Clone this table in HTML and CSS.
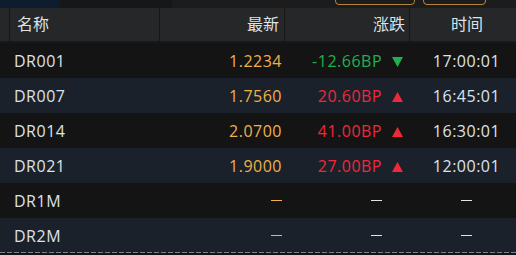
FILE: index.html
```html
<!DOCTYPE html>
<html lang="zh">
<head>
<meta charset="utf-8">
<link rel="stylesheet" href="styles.css">
</head>
<body>
<div class="topbar">
  <div class="tb-nav"></div>
  <div class="tb-mid"></div>
  <div class="tb-rest">
    <div class="tb-btn tb-btn1"></div>
    <div class="tb-btn tb-btn2"></div>
  </div>
</div>
<div class="grid">
  <div class="hcell lead"></div>
  <div class="hcell name">名称</div>
  <div class="hcell num">最新</div>
  <div class="hcell chg">涨跌</div>
  <div class="hcell time">时间</div>
</div>
<div class="rows">
  <div class="row odd">
    <div class="cell lead"></div>
    <div class="cell name">DR001</div>
    <div class="cell num">1.2234</div>
    <div class="cell chg down"><span>-12.66BP</span><span class="tri"><svg viewBox="0 0 11 10" width="11" height="10"><polygon points="0,0 11,0 5.5,10" fill="#1fb14f"/></svg></span></div>
    <div class="cell time">17:00:01</div>
  </div>
  <div class="row even">
    <div class="cell lead"></div>
    <div class="cell name">DR007</div>
    <div class="cell num">1.7560</div>
    <div class="cell chg up"><span>20.60BP</span><span class="tri"><svg viewBox="0 0 11 10" width="11" height="10"><polygon points="5.5,0 11,10 0,10" fill="#f0283a"/></svg></span></div>
    <div class="cell time">16:45:01</div>
  </div>
  <div class="row odd">
    <div class="cell lead"></div>
    <div class="cell name">DR014</div>
    <div class="cell num">2.0700</div>
    <div class="cell chg up"><span>41.00BP</span><span class="tri"><svg viewBox="0 0 11 10" width="11" height="10"><polygon points="5.5,0 11,10 0,10" fill="#f0283a"/></svg></span></div>
    <div class="cell time">16:30:01</div>
  </div>
  <div class="row even">
    <div class="cell lead"></div>
    <div class="cell name">DR021</div>
    <div class="cell num">1.9000</div>
    <div class="cell chg up"><span>27.00BP</span><span class="tri"><svg viewBox="0 0 11 10" width="11" height="10"><polygon points="5.5,0 11,10 0,10" fill="#f0283a"/></svg></span></div>
    <div class="cell time">12:00:01</div>
  </div>
  <div class="row odd">
    <div class="cell lead"></div>
    <div class="cell name">DR1M</div>
    <div class="cell num"><span class="dash dash-y"></span></div>
    <div class="cell chg"><span class="dash"></span><span class="tri"></span></div>
    <div class="cell time"><span class="dash"></span></div>
  </div>
  <div class="row even last">
    <div class="cell lead"></div>
    <div class="cell name">DR2M</div>
    <div class="cell num"><span class="dash dash-y"></span></div>
    <div class="cell chg"><span class="dash"></span><span class="tri"></span></div>
    <div class="cell time"><span class="dash"></span></div>
  </div>
</div>
</body>
</html>
```

FILE: styles.css
```css
html, body {
  margin: 0;
  padding: 0;
  background: #141414;
  width: 516px;
  height: 255px;
  overflow: hidden;
  font-family: "Open Sans", "Noto Sans CJK SC", sans-serif;
  font-size: 16px;
  color: #dde2e8;
}

.topbar {
  display: flex;
  height: 8px;
  overflow: hidden;
}
.tb-nav { width: 60px; background: #0f1c2e; }
.tb-mid { width: 112px; background: #171717; }
.tb-rest {
  flex: 1;
  background: #1c1c1c;
  display: flex;
  align-items: flex-end;
  padding-left: 163px;
  gap: 8px;
}
.tb-btn {
  height: 20px;
  margin-bottom: 3px;
  border: 1px solid #b5853f;
  border-radius: 4px;
  box-sizing: border-box;
}
.tb-btn1 { width: 80px; }
.tb-btn2 { width: 63px; }

.grid, .row {
  display: grid;
  grid-template-columns: 9px 150px 125px 125px 1fr;
}
.grid {
  height: 35px;
  background: #252729;
  border-bottom: 2px solid #181818;
  box-sizing: border-box;
}
.hcell {
  line-height: 33px;
  border-left: 1px solid #161616;
}
.hcell.lead { border-left: none; }
.hcell.name { padding-left: 7px; }
.hcell.num { text-align: right; padding-right: 5px; }
.hcell.chg { text-align: right; padding-right: 4px; }
.hcell.time { text-align: center; padding-left: 8px; }

.row {
  height: 35px;
  padding-top: 2px;
  line-height: 33px;
  box-sizing: border-box;
  letter-spacing: 0.5px;
}
.row.odd { background: #141414; }
.row.even { background: #1b212b; }
.row.last {
  background-image: repeating-linear-gradient(to right, #7c8189 0 5px, transparent 5px 7px);
  background-size: 100% 1px;
  background-position: 0 bottom;
  background-repeat: no-repeat;
}
.cell { white-space: nowrap; }
.cell.name { padding-left: 5px; }
.cell.num { text-align: right; padding-right: 2px; color: #f0b04a; }
.cell.chg {
  display: flex;
  justify-content: flex-end;
  align-items: center;
  padding-right: 6px;
  gap: 10px;
}
.cell.chg.down { color: #1fb14f; }
.cell.chg.up { color: #f0283a; }
.tri { width: 11px; height: 10px; display: inline-block; line-height: 0; }
.tri svg { display: block; }
.cell.time { text-align: center; padding-left: 8px; }

.dash {
  display: inline-block;
  width: 11px;
  height: 1px;
  background: #e0e4ea;
  vertical-align: top;
  margin-top: 15px;
}
.cell.chg .dash { align-self: flex-start; }
.dash-y { background: #f2b24c; }
```
